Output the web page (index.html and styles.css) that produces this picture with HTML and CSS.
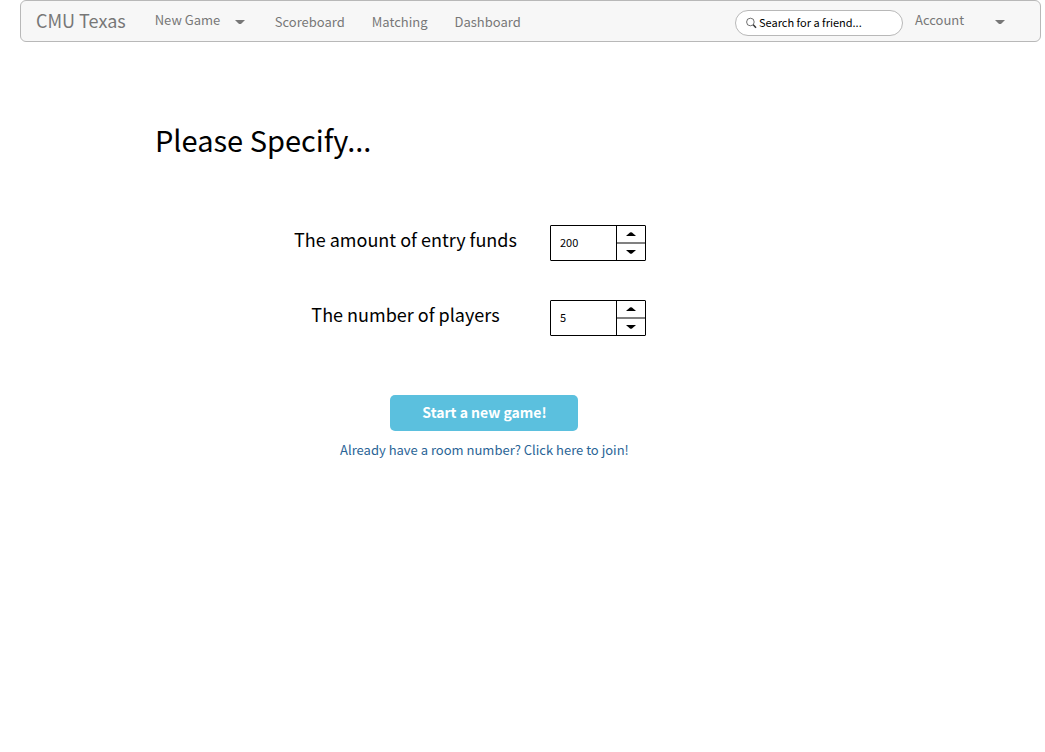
FILE: index.html
```html
<!DOCTYPE html>
<html lang="en">
<head>
<meta charset="utf-8">
<meta name="viewport" content="width=device-width, initial-scale=1">
<title>CMU Texas</title>
<link rel="stylesheet" href="styles.css">
</head>
<body>
<nav class="navbar">
  <a class="brand" href="#">CMU Texas</a>
  <button class="menu menu-game" type="button" aria-haspopup="true">New Game
    <svg class="caret" viewBox="0 0 10 5" aria-hidden="true"><path d="M0 0H10L6.5 3.4Q5 4.8 3.5 3.4Z"/></svg>
  </button>
  <div class="links">
    <a href="#">Scoreboard</a>
    <a href="#">Matching</a>
    <a href="#">Dashboard</a>
  </div>
  <label class="search">
    <svg class="search-icon" viewBox="0 0 12 12" aria-hidden="true"><circle cx="4.4" cy="5" r="3.8"/><path class="handle" d="M7.2 7.8L10 10.8"/></svg>
    <input type="text" placeholder="Search for a friend..." aria-label="Search for a friend">
  </label>
  <button class="menu menu-account" type="button" aria-haspopup="true">Account
    <svg class="caret" viewBox="0 0 10 5" aria-hidden="true"><path d="M0 0H10L6.5 3.4Q5 4.8 3.5 3.4Z"/></svg>
  </button>
</nav>
<main class="content">
  <h1 class="title">Please Specify...</h1>
  <form class="setup">
    <div class="fields">
      <label class="field-label" for="funds">The amount of entry funds</label>
      <div class="stepper">
        <input id="funds" type="text" inputmode="numeric" value="200">
        <div class="steps">
          <button type="button" aria-label="Increase funds"><svg viewBox="0 0 10 4" aria-hidden="true"><path d="M0 4H10L6 0.6Q5 0 4 0.6Z"/></svg></button>
          <button type="button" aria-label="Decrease funds"><svg viewBox="0 0 10 4" aria-hidden="true"><path d="M0 0H10L6 3.4Q5 4 4 3.4Z"/></svg></button>
        </div>
      </div>
      <label class="field-label" for="players">The number of players</label>
      <div class="stepper">
        <input id="players" type="text" inputmode="numeric" value="5">
        <div class="steps">
          <button type="button" aria-label="Increase players"><svg viewBox="0 0 10 4" aria-hidden="true"><path d="M0 4H10L6 0.6Q5 0 4 0.6Z"/></svg></button>
          <button type="button" aria-label="Decrease players"><svg viewBox="0 0 10 4" aria-hidden="true"><path d="M0 0H10L6 3.4Q5 4 4 3.4Z"/></svg></button>
        </div>
      </div>
    </div>
    <div class="actions">
      <button class="start" type="submit">Start a new game!</button>
      <a class="join" href="#">Already have a room number? Click here to join!</a>
    </div>
  </form>
</main>
</body>
</html>
```
FILE: styles.css
```css
* {
  box-sizing: border-box;
}

body {
  margin: 0;
  background: #fff;
  color: #000;
  font-family: "Noto Sans CJK SC", "Noto Sans", sans-serif;
  font-size: 13px;
  line-height: 20px;
}

button,
input {
  margin: 0;
  padding: 0;
  border: 0;
  background: none;
  color: inherit;
  font: inherit;
}

a {
  color: inherit;
  text-decoration: none;
}

svg {
  display: block;
}

.navbar {
  display: flex;
  align-items: center;
  margin: 0 4px 0 20px;
  padding: 4px 35px 4px 15px;
  border: 1px solid #b8b8b8;
  border-radius: 6px;
  background: #f7f7f7;
  color: #777;
}

.brand {
  padding-bottom: 2px;
  font-size: 18px;
  line-height: 30px;
  white-space: nowrap;
}

.menu {
  display: flex;
  align-items: center;
  justify-content: space-between;
  width: 90px;
  padding-bottom: 2px;
  white-space: nowrap;
}

.menu-game {
  margin-left: 29px;
}

.menu-account {
  margin-left: 12px;
}

.caret {
  width: 10px;
  height: 5px;
  margin-top: 4px;
  fill: #777;
}

.links {
  display: flex;
  gap: 27px;
  margin-left: 30px;
  padding-top: 2px;
}

.search {
  display: flex;
  align-items: center;
  width: 168px;
  height: 26px;
  margin-top: 3px;
  margin-left: auto;
  padding: 0 10px;
  border: 1px solid #b8b8b8;
  border-radius: 13px;
  background: #fff;
  color: #000;
  font-size: 11px;
}

.search input {
  flex: 1;
  min-width: 0;
  margin-left: 1px;
  padding-bottom: 2px;
}

.search input::placeholder {
  color: #000;
  opacity: 1;
}

.search-icon {
  width: 12px;
  height: 12px;
  fill: none;
  stroke: #333;
  stroke-width: 0.7;
}

.handle {
  stroke-width: 1.5;
}

.content {
  padding: 74px 20px 40px 155px;
}

.title {
  margin: 0;
  font-size: 29px;
  font-weight: 400;
  line-height: 46px;
}

.setup {
  width: fit-content;
  margin: 63px 0 0 139px;
}

.fields {
  display: grid;
  grid-template-columns: auto auto;
  justify-content: start;
  column-gap: 33px;
  row-gap: 39px;
}

.field-label {
  padding-bottom: 8px;
  font-size: 18px;
  line-height: 28px;
  text-align: center;
}

.stepper {
  display: flex;
  width: 96px;
  height: 36px;
  border: 1px solid #000;
  border-radius: 1px;
}

.stepper input {
  flex: 1;
  min-width: 0;
  padding: 0 0 2px 9px;
  font-size: 11px;
}

.steps {
  display: flex;
  flex-direction: column;
  width: 29px;
  border-left: 1px solid #000;
}

.steps button {
  display: flex;
  flex: 1;
  align-items: center;
  justify-content: center;
}

.steps button + button {
  border-top: 2px solid #808080;
}

.steps svg {
  width: 10px;
  height: 4px;
}

.actions {
  display: flex;
  flex-direction: column;
  align-items: center;
  margin-top: 59px;
  padding-left: 29px;
}

.start {
  width: 188px;
  height: 36px;
  padding-bottom: 2px;
  border-radius: 5px;
  background: #5bc0de;
  color: #fff;
  font-size: 14px;
  font-weight: 700;
}

.join {
  margin-top: 9px;
  color: #2a6496;
}
```
